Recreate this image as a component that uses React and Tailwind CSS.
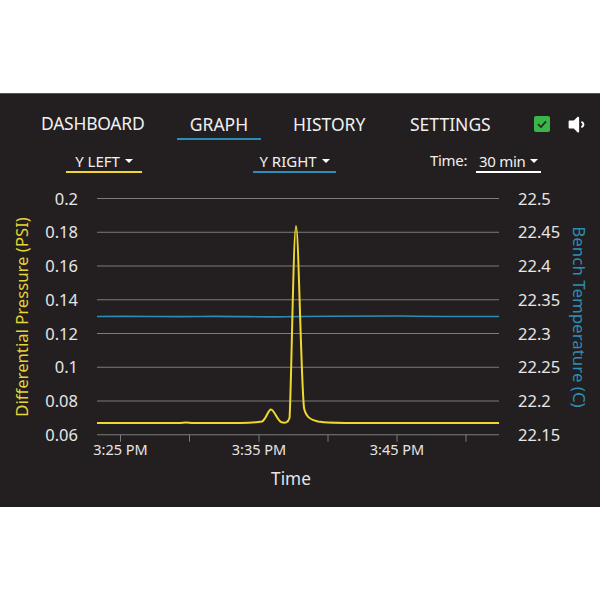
import React from 'react'
import { FaVolumeDown } from 'react-icons/fa'

const leftTicks = ['0.2', '0.18', '0.16', '0.14', '0.12', '0.1', '0.08', '0.06']
const rightTicks = ['22.5', '22.45', '22.4', '22.35', '22.3', '22.25', '22.2', '22.15']
const tickX = [120.5, 189.5, 259, 328, 397, 466]
const timeLabels = [
  { x: 120.5, label: '3:25 PM' },
  { x: 259, label: '3:35 PM' },
  { x: 397, label: '3:45 PM' },
]

// svg starts at y=180 of the page
const gridY = (i) => 18.5 + i * 33.75

const yellowPath =
  'M97 243 L180 243 C184 242.2 188 242.2 192 243 L240 243 C250 243 256 242.5 262 241.5 C266 240 268 229.5 271 229.5 C274 229.5 277 240 281 242 C285 243.5 288 243 289.5 238 C291 225 293.5 46 296 46 C298.5 46 301 200 304 228 C306 237 310 239.5 318 241.5 C326 243 340 243 360 243 L499 243'

const bluePath =
  'M97 136.5 C140 136 170 137 200 136.5 C230 136 260 137.2 285 136.8 C310 136.2 350 136 400 136 C440 136.6 470 136.4 499 136.5'

const Caret = () => (
  <span className="inline-block w-0 h-0 border-x-[4px] border-x-transparent border-t-[4px] border-t-white" />
)

const Chart = () => (
  <svg width="600" height="315" viewBox="0 0 600 315" className="block">
    {leftTicks.map((t, i) => (
      <g key={t}>
        <line x1="97" x2="499" y1={gridY(i)} y2={gridY(i)} stroke="#7d7b7b" strokeWidth="1" />
        <text x="78" y={gridY(i) + 6.2} textAnchor="end" fontSize="16.5" fill="#e6e6e6">{t}</text>
        <text x="518" y={gridY(i) + 6.2} fontSize="16.5" fill="#e6e6e6">{rightTicks[i]}</text>
      </g>
    ))}

    {tickX.map((x) => (
      <line key={x} x1={x} x2={x} y1={gridY(7)} y2={gridY(7) + 7} stroke="#7d7b7b" strokeWidth="1" />
    ))}
    {timeLabels.map((t) => (
      <text key={t.label} x={t.x} y="275" textAnchor="middle" fontSize="14.5" fill="#e6e6e6">{t.label}</text>
    ))}
    <text x="291" y="304.5" textAnchor="middle" fontSize="17.2" fill="#e6e6e6">Time</text>

    <path d={bluePath} fill="none" stroke="#2b8eb4" strokeWidth="1.6" />
    <path d={yellowPath} fill="none" stroke="#eed82f" strokeWidth="2" strokeLinejoin="round" />

    <text transform="translate(28 137) rotate(-90)" textAnchor="middle" fontSize="16.7" fill="#e3d437">
      Differential Pressure (PSI)
    </text>
    <text transform="translate(573 137) rotate(90)" textAnchor="middle" fontSize="16.9" fill="#2b8eb4">
      Bench Temperature (C)
    </text>
  </svg>
)

export default function App() {
  return (
    <div className="w-[600px] h-[600px] bg-white pt-[93px] font-['Noto_Sans',sans-serif]">
      <div className="h-[414px] bg-[#231f20] border-t border-[#555] text-[#f0f0f0]">
        {/* Nav */}
        <div className="flex items-start pt-[18px] pl-[41px] h-[46px] text-[17.5px] leading-[24px]">
          <span className="w-[136px] -mt-px tracking-[-0.25px]">DASHBOARD</span>
          <span className="w-[84px] text-center border-b-2 border-[#2b8eb4] h-[28px]">GRAPH</span>
          <span className="w-[149px] pl-[32px]">HISTORY</span>
          <span className="w-[124px]">SETTINGS</span>
          <span className="w-[32px] pt-[4px]">
            <span className="flex items-center justify-center w-[16px] h-[16px] rounded-[2px] bg-[#39b54a]">
              <svg width="12" height="12" viewBox="0 0 12 12">
                <path d="M2 6.2 L5 9 L10 3.4" fill="none" stroke="#1c2b1c" strokeWidth="1.6" />
              </svg>
            </span>
          </span>
          <FaVolumeDown className="mt-[2px] text-white" size={21} />
        </div>

        {/* Dropdowns */}
        <div className="flex items-start h-[40px] text-[15px] leading-[20px]">
          <div className="ml-[66px] w-[76px] pt-[10px] box-content border-b-2 border-[#eed82f] flex items-center justify-center gap-[5px] h-[21px]">
            <span>Y LEFT</span>
            <Caret />
          </div>
          <div className="ml-[111px] w-[83px] pt-[10px] box-content border-b-2 border-[#2b8eb4] flex items-center justify-center gap-[5px] h-[21px]">
            <span>Y RIGHT</span>
            <Caret />
          </div>
          <span className="ml-[94px] pt-[10px] tracking-[-0.3px]">Time:</span>
          <div className="ml-[9px] w-[65px] pt-[10px] box-content border-b-2 border-white flex items-center justify-center gap-[5px] h-[21px]">
            <span className="tracking-[-0.3px]">30 min</span>
            <Caret />
          </div>
        </div>

        <Chart />
      </div>
    </div>
  )
}
